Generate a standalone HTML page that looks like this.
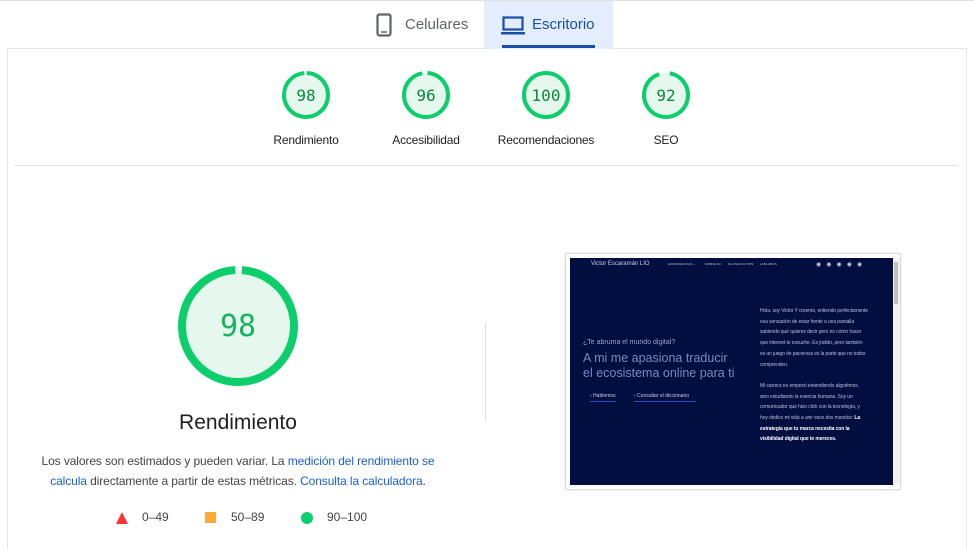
<!DOCTYPE html>
<html><head><meta charset="utf-8"><style>
body{margin:0;width:974px;height:527px;overflow:hidden;background:#fff;font-family:"Liberation Sans",sans-serif;position:relative;color:#212121}
.abs{position:absolute}
.card{position:absolute;left:7px;top:48px;width:958px;height:500px;border:1px solid #e4e4e4;border-bottom:none}
.lbl{position:absolute;font-size:12px;color:#212121;text-align:center;width:140px;letter-spacing:-.2px}
a{color:#1a5fd8;text-decoration:none}
</style></head><body>
<div class="abs" style="left:0;top:0;width:974px;height:1px;background:#e0e0e0"></div>
<div class="card"></div>
<svg class="abs" style="left:376px;top:13px" width="16" height="24" viewBox="0 0 16 24"><rect x="1.5" y="1.5" width="13" height="21" rx="2" fill="none" stroke="#5f6368" stroke-width="2.2"/><line x1="5" y1="19" x2="11" y2="19" stroke="#5f6368" stroke-width="1.5"/></svg>
<div class="abs" style="left:405px;top:16px;font-size:15px;color:#5f6368">Celulares</div>
<div class="abs" style="left:484px;top:1px;width:129px;height:48px;background:#e3edfb"></div>
<svg class="abs" style="left:501px;top:16px" width="24" height="19" viewBox="0 0 24 19"><rect x="2.5" y="1.5" width="19" height="12" fill="none" stroke="#1a4fa8" stroke-width="2.2"/><rect x="0" y="16" width="24" height="2.5" fill="#1a4fa8"/></svg>
<div class="abs" style="left:532px;top:16px;font-size:15px;color:#1a4fa8">Escritorio</div>
<div class="abs" style="left:502px;top:45px;width:93px;height:3px;background:#1a4fa8"></div>
<svg class="abs" style="left:0;top:0" width="974" height="527">
 <g fill="#e6f8ee" stroke="#0cce6b" stroke-width="4">
  <circle cx="306" cy="95" r="22" stroke-dasharray="135.5 2.7" transform="rotate(-88 306 95)"/>
  <circle cx="426" cy="95" r="22" stroke-dasharray="132.7 5.5" transform="rotate(-86 426 95)"/>
  <circle cx="546" cy="95" r="22"/>
  <circle cx="666" cy="95" r="22" stroke-dasharray="127.2 11" transform="rotate(-80 666 95)"/>
  <circle cx="238" cy="326" r="56" stroke-width="8" stroke-dasharray="344.8 7" transform="rotate(-86 238 326)"/>
 </g>
 <g font-family="DejaVu Sans Mono,monospace" font-size="16" fill="#078a3c" text-anchor="middle">
  <text x="306" y="101">98</text><text x="426" y="101">96</text><text x="546" y="101">100</text><text x="666" y="101">92</text>
 </g>
 <text x="238" y="336" font-family="DejaVu Sans Mono,monospace" font-size="30" fill="#14b55c" text-anchor="middle">98</text>
 <line x1="15" y1="165.5" x2="958" y2="165.5" stroke="#e0e0e0"/>
 <line x1="485.5" y1="323" x2="485.5" y2="420" stroke="#e0e0e0"/>
 <polygon points="122,512 128,524 116,524" fill="#f33"/>
 <rect x="205" y="512" width="11" height="11" fill="#fa3"/>
 <circle cx="307" cy="518" r="6" fill="#0cce6b"/>
</svg>
<div class="lbl" style="left:236px;top:133px">Rendimiento</div>
<div class="lbl" style="left:356px;top:133px">Accesibilidad</div>
<div class="lbl" style="left:476px;top:133px">Recomendaciones</div>
<div class="lbl" style="left:596px;top:133px">SEO</div>
<div class="abs" style="left:138px;top:411px;width:200px;text-align:center;font-size:21px;color:#212121">Rendimiento</div>
<div class="abs" style="left:34px;top:451px;width:408px;text-align:center;font-size:12px;line-height:20px;color:#444;letter-spacing:-.1px">Los valores son estimados y pueden variar. La <a>medición del rendimiento se calcula</a> directamente a partir de estas métricas. <a>Consulta la calculadora</a>.</div>
<div class="abs" style="left:142px;top:510px;font-size:12px;color:#444">0–49</div>
<div class="abs" style="left:231px;top:510px;font-size:12px;color:#444">50–89</div>
<div class="abs" style="left:327px;top:510px;font-size:12px;color:#444">90–100</div>
<div class="abs" style="left:565px;top:253px;width:334px;height:235px;border:1px solid #ddd;border-radius:2px;background:#fff;box-shadow:0 0 2px rgba(0,0,0,.15)"></div>
<div class="abs" style="left:570px;top:258px;width:323px;height:227px;background:#020d40;overflow:hidden;color:#c8cde8">
 <div class="abs" style="left:21px;top:3px;font-size:6px">Victor Escaramán LIO</div>
 <div class="abs" style="left:98px;top:4px;font-size:3px;letter-spacing:.2px">EXPERIENCIAS ⌄ &nbsp;&nbsp;&nbsp;&nbsp;&nbsp;&nbsp; SOBRE MI &nbsp;&nbsp;&nbsp;&nbsp;&nbsp; GLOSARIO PMS &nbsp;&nbsp;&nbsp;&nbsp; LABLABOS</div>
 <div class="abs" style="left:246px;top:3px;font-size:6px;letter-spacing:5px">◉◉◉◉◉</div>
 <div class="abs" style="left:13px;top:81px;font-size:7px;color:#9aa3d0">¿Te abruma el mundo digital?</div>
 <div class="abs" style="left:13px;top:93px;font-size:12.5px;line-height:15px;color:#7d87c0">A mi me apasiona traducir<br>el ecosistema online para ti</div>
 <div class="abs" style="left:20px;top:135px;font-size:5px;border-bottom:1px solid #2a4bc0;padding-bottom:2px">› Hablemos</div>
 <div class="abs" style="left:64px;top:135px;font-size:5px;border-bottom:1px solid #2a4bc0;padding-bottom:2px;width:62px">› Consultar el diccionario</div>
 <div class="abs" style="left:190px;top:48px;width:108px;font-size:5px;line-height:10.7px;color:#b8bedc;letter-spacing:-.1px">Hola, soy Victor Y creeme, entiendo perfectamente esa sensación de estar frente a una pantalla sabiendo qué quieres decir pero no cómo hacer que internet te escuche. Es jodido, pero también es un juego de paciencia es la parte que no todos comprenden.<br><br>Mi carrera no empezó entendiendo algoritmos, sino estudiando la esencia humana. Soy un comunicador que hizo click con la tecnología, y hoy dedico mi vida a unir esos dos mundos: <b style="color:#fff">La estrategia que tu marca necesita con la visibilidad digital que te mereces.</b></div>
</div>
<div class="abs" style="left:893px;top:258px;width:7px;height:227px;background:#f1f1f1"></div>
<div class="abs" style="left:894px;top:262px;width:4px;height:42px;background:#c1c1c1"></div>
</body></html>
